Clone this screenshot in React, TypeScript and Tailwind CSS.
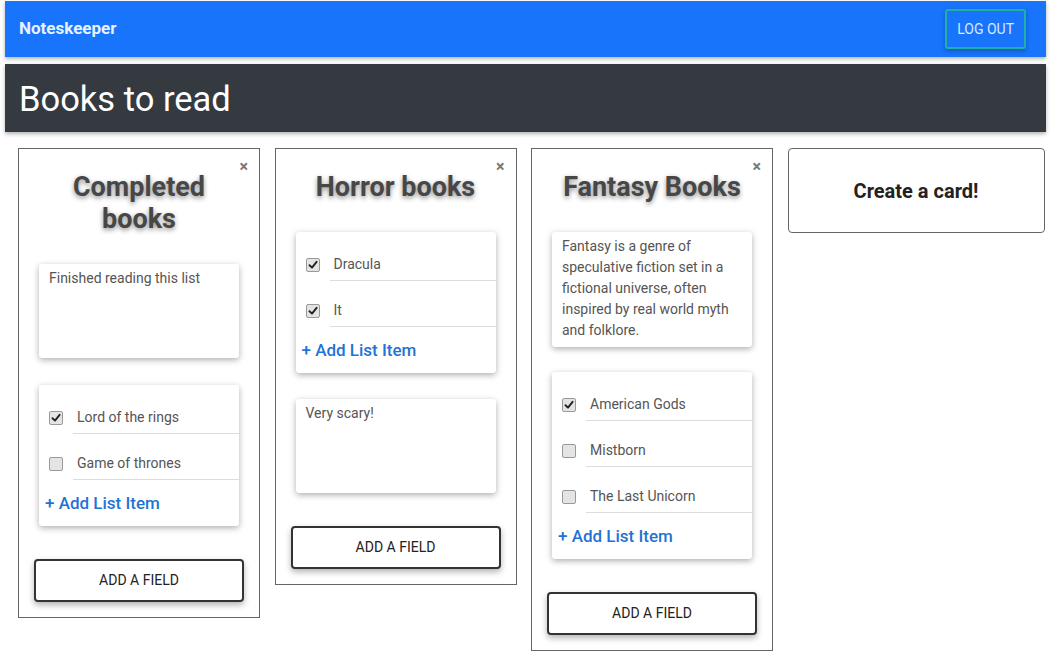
import { ReactNode } from "react";

const font = { fontFamily: "Roboto, 'Noto Sans', sans-serif" };

type Item = { label: string; done: boolean };

function CheckBox({ checked }: { checked: boolean }) {
    return (
        <span className="w-[14px] h-[14px] shrink-0 rounded-[2px] border border-[#9a9a9a] bg-[#e4e4e4] flex items-center justify-center">
            {checked && (
                <svg width="10" height="10" viewBox="0 0 10 10">
                    <path d="M1.5 5.2 L4 7.6 L8.6 1.8" fill="none" stroke="#222" strokeWidth="1.9" strokeLinecap="round" strokeLinejoin="round" />
                </svg>
            )}
        </span>
    );
}

function Note({ children, minH }: { children: ReactNode; minH: string }) {
    return (
        <div className={`w-[200px] ml-[20px] bg-white rounded-[3px] shadow-[0_2px_6px_rgba(0,0,0,0.32)] pt-[4px] pb-[6px] px-[10px] text-[14px] leading-[21px] text-[#555] ${minH}`}>
            {children}
        </div>
    );
}

function ListBox({ items }: { items: Item[] }) {
    return (
        <div className="w-[200px] ml-[20px] bg-white rounded-[3px] shadow-[0_2px_6px_rgba(0,0,0,0.32)] pt-[17px] pb-[10px]">
            <div className="flex flex-col gap-[14px]">
                {items.map((it) => (
                    <div key={it.label} className="flex items-center h-[32px] pl-[10px]">
                        <CheckBox checked={it.done} />
                        <div className="ml-[10px] flex-1 h-full flex items-center pl-[4px] border-b border-[#dcdcdc] text-[14px] text-[#555]">
                            {it.label}
                        </div>
                    </div>
                ))}
            </div>
            <div className="mt-[12px] h-[24px] flex items-center pl-[6px] text-[17px] font-medium text-[#1e74d6]">
                + Add List Item
            </div>
        </div>
    );
}

function Card({ title, children, gap }: { title: ReactNode; children: ReactNode; gap: string }) {
    return (
        <div className="relative w-[242px] shrink-0 border border-[#666] bg-white pt-[22px] pb-[15px]">
            <span className="absolute top-[6px] right-[11px] text-[16px] font-bold text-[#777]">×</span>
            <h2 className="text-center text-[27px] leading-[32px] font-bold text-[#474747] [text-shadow:0_2px_5px_rgba(0,0,0,0.45)] mb-[29px]">
                {title}
            </h2>
            <div className={`flex flex-col ${gap}`}>{children}</div>
            <button className="mt-[33px] mx-auto block w-[210px] h-[43px] bg-white border-2 border-[#333] rounded-[4px] shadow-[0_3px_6px_rgba(0,0,0,0.3)] text-[14px] text-[#222]">
                ADD A FIELD
            </button>
        </div>
    );
}

export default function App() {
    return (
        <div className="min-h-screen bg-white px-[5px] pt-px" style={font}>
            <nav className="h-[56px] bg-[#1774fb] flex items-center justify-between pl-[14px] pr-[20px] shadow-[0_2px_4px_rgba(0,0,0,0.3)]">
                <span className="text-[17px] font-bold text-[#e8f1ff]">Noteskeeper</span>
                <button className="h-[40px] px-[10px] border-2 border-[#1fb0a8] rounded-[3px] text-[14px] text-[#dbe9ff] shadow-[0_2px_4px_rgba(0,0,0,0.25)]">
                    LOG OUT
                </button>
            </nav>
            <header className="mt-[7px] h-[68px] bg-[#343a40] flex items-center pl-[14px] pt-[4px] shadow-[0_2px_4px_rgba(0,0,0,0.3)]">
                <h1 className="text-[34.5px] text-white font-normal">Books to read</h1>
            </header>
            <main className="mt-[16px] pl-[13px] flex items-start gap-[14.5px]">
                <Card title={<>Completed<br />books</>} gap="gap-[27px]">
                    <Note minH="min-h-[94px]">Finished reading this list</Note>
                    <ListBox items={[{ label: "Lord of the rings", done: true }, { label: "Game of thrones", done: false }]} />
                </Card>
                <Card title="Horror books" gap="gap-[26px]">
                    <ListBox items={[{ label: "Dracula", done: true }, { label: "It", done: true }]} />
                    <Note minH="min-h-[94px]">Very scary!</Note>
                </Card>
                <Card title="Fantasy Books" gap="gap-[25px]">
                    <Note minH="min-h-[94px]">
                        Fantasy is a genre of<br />speculative fiction set in a<br />fictional universe, often<br />inspired by real world myth<br />and folklore.
                    </Note>
                    <ListBox items={[{ label: "American Gods", done: true }, { label: "Mistborn", done: false }, { label: "The Last Unicorn", done: false }]} />
                </Card>
                <div className="w-[257px] h-[85px] border border-[#666] rounded-[4px] flex items-center justify-center">
                    <span className="text-[20px] font-bold text-[#222]">Create a card!</span>
                </div>
            </main>
        </div>
    );
}
